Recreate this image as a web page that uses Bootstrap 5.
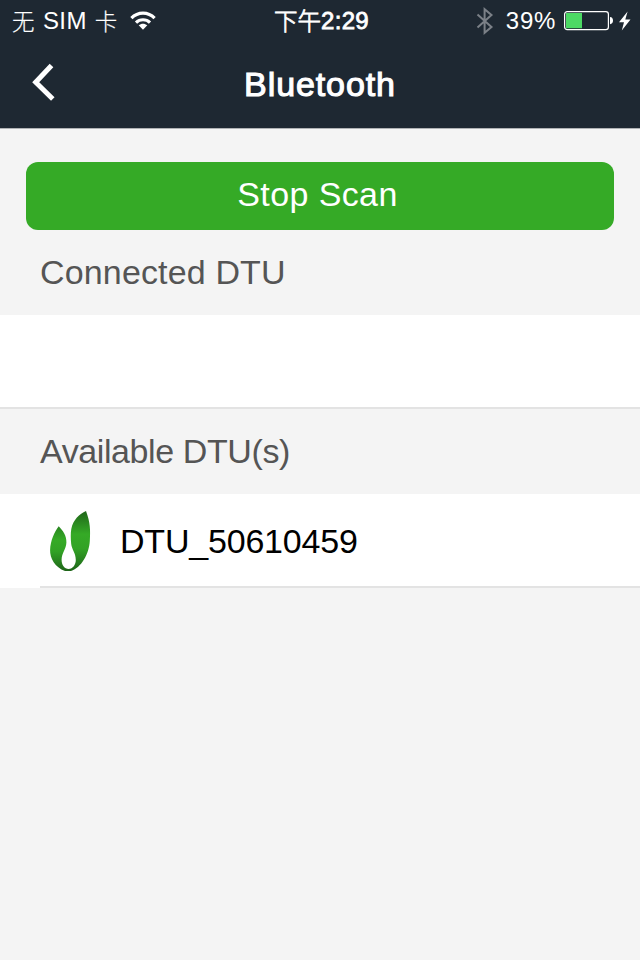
<!DOCTYPE html>
<html lang="en">
<head>
<meta charset="utf-8">
<meta name="viewport" content="width=device-width, initial-scale=1">
<title>Bluetooth</title>
<link href="https://cdn.jsdelivr.net/npm/bootstrap@5.3.0/dist/css/bootstrap.min.css" rel="stylesheet">
<style>
body { font-family: "Liberation Sans", "Noto Sans CJK SC", sans-serif; background: #f4f4f4; font-size: 34px; line-height: 40px; }
.app { height: 960px; }
.app-header { height: 128px; background: #1e2832; box-shadow: 0 1px 0 #b0b2b5; }
.status-row { height: 40px; font-size: 24px; line-height: 40px; display: grid; grid-template-columns: 1fr auto 1fr; padding: 1px 9px 0 12px; }
.carrier { letter-spacing: .4px; }
.cjk { font-family: "Noto Sans CJK SC", sans-serif; font-weight: 300; font-size: 22.5px; line-height: 36px; padding-bottom: 3px; -webkit-text-stroke: .2px #fff; }
.wifi { margin: 0 0 2px 12px; }
.clock { letter-spacing: .3px; -webkit-text-stroke: .8px #fff; }
.clock .cjk { font-size: 23.5px; letter-spacing: 0; -webkit-text-stroke: .8px #fff; }
.percent { letter-spacing: .7px; }
.title-row { height: 88px; display: grid; grid-template-columns: 100px 1fr 100px; }
.title-text { font-size: 34px; font-weight: 400; letter-spacing: .9px; -webkit-text-stroke: 1.1px #fff; line-height: 40px; }
.back-btn { padding: 0 0 4px 30px; }
.scan-area { padding: 34px 26px 0; }
.scan-btn { height: 68px; border-radius: 12px; font-size: 34px; line-height: 40px; background: #35aa26; letter-spacing: .4px; padding: 0 5px 5px 0; }
.scan-btn:hover { background: #2f9a21; }
.section-label { height: 85px; padding: 0 0 2px 40px; color: #555; font-size: 34px; letter-spacing: .15px; }
.section-label.tight { letter-spacing: -.4px; }
.connected-list { height: 94px; border-bottom: 2px solid #e3e3e3; }
.device { height: 94px; }
.device-rule { border-bottom: 2px solid #e3e3e3; margin-left: 40px; padding-top: 2px; height: 94px; letter-spacing: -.2px; }
</style>
<script src="https://cdn.jsdelivr.net/npm/bootstrap@5.3.0/dist/js/bootstrap.bundle.min.js"></script>
</head>
<body>
<div class="app d-flex flex-column">
  <header class="app-header text-white">
    <div class="status-row">
      <div class="carrier d-flex align-items-center text-nowrap"><span class="cjk">无</span><span class="ms-2">SIM</span><span class="cjk ms-2">卡</span>
        <svg class="wifi" width="26" height="20" viewBox="0 0 26 20" fill="none" stroke="#fff" stroke-width="3.2"><path d="M1.4 8.2C7.9 1.5 18.1 1.5 24.6 8.2M6 12.6C9.9 8.8 16.1 8.8 20 12.6"/><path d="M8.7 15.2C11.3 13.1 14.7 13.1 17.3 15.2L13 19.7Z" fill="#fff" stroke="none"/></svg>
      </div>
      <div class="clock d-flex align-items-center"><span class="cjk">下午</span>2:29</div>
      <div class="d-flex align-items-center justify-content-end text-nowrap">
        <svg width="18" height="28" viewBox="0 0 18 28" fill="none" stroke="#7b8087" stroke-width="2"><path d="M1.5 7.5 15.5 20 8.6 25.8V2.2L15.5 8 1.5 20.5"/></svg>
        <span class="percent ms-2 ps-1">39%</span>
        <svg class="ms-2" width="51" height="20" viewBox="0 0 51 20"><rect x=".6" y=".6" width="43.8" height="18" rx="2.6" fill="none" stroke="#fff" stroke-width="1.2"/><path d="M2 2h16v15.2H2Z" fill="#4cd964"/><path d="M46 6q3 .4 3 3.6t-3 3.6Z" fill="#fff"/></svg>
        <svg class="ms-1" width="12" height="20" viewBox="0 0 12 20" fill="#fff"><path d="M8.6.5 0 11.3H5L2.8 19.5 11.5 8.4H6.3Z"/></svg>
      </div>
    </div>
    <div class="title-row align-items-center">
      <a href="#" class="back-btn d-flex" aria-label="Back"><svg width="26" height="40" viewBox="0 0 26 40" fill="none" stroke="#fff" stroke-width="5"><path d="M21.5 3.5 5.7 20.2 22.8 37"/></svg></a>
      <h1 class="title-text m-0 text-center">Bluetooth</h1>
    </div>
  </header>
  <main class="flex-grow-1">
    <div class="scan-area"><button type="button" class="scan-btn btn w-100 border-0 text-white">Stop Scan</button></div>
    <div class="section-label d-flex align-items-center">Connected DTU</div>
    <div class="connected-list bg-white"></div>
    <div class="section-label tight d-flex align-items-center">Available DTU(s)</div>
    <div class="device bg-white d-flex">
      <div class="device-rule d-flex align-items-center w-100 text-black">
        <svg class="ms-2" width="44" height="64" viewBox="48 509 44 64">
          <defs>
            <linearGradient id="leafRight" x1="0" y1="511" x2="0" y2="572" gradientUnits="userSpaceOnUse"><stop stop-color="#20651a"/><stop offset=".38" stop-color="#35aa26"/><stop offset=".62" stop-color="#32a225"/><stop offset="1" stop-color="#1d6118"/></linearGradient>
            <linearGradient id="leafLeft" x1="0" y1="526" x2="0" y2="572" gradientUnits="userSpaceOnUse"><stop stop-color="#288420"/><stop offset=".3" stop-color="#35aa26"/><stop offset=".55" stop-color="#32a225"/><stop offset="1" stop-color="#1d6118"/></linearGradient>
          </defs>
          <path fill="url(#leafLeft)" d="M58.7 526.3C63 530.5 66.7 536 66.4 542.5C66.2 549 61.7 553 61.6 559.5C61.5 565 64.5 569 68.7 569V571H65C55 567.5 49.8 558 50.1 550C50.4 541 54.5 531.5 58.7 526.3Z"/>
          <path fill="url(#leafRight)" d="M86 511C90.3 522.5 90.5 530 89.8 541C89 554 81.5 567.5 71 571H65V569H68.5C73 569 75.8 564.5 75.8 560C75.8 553 71.8 549.5 71.2 544C70.7 539 70.5 533 71.3 529C73.2 519.5 79.5 514 86 511Z"/>
        </svg>
        <span class="ps-4 ms-1">DTU_50610459</span>
      </div>
    </div>
  </main>
</div>
</body>
</html>
